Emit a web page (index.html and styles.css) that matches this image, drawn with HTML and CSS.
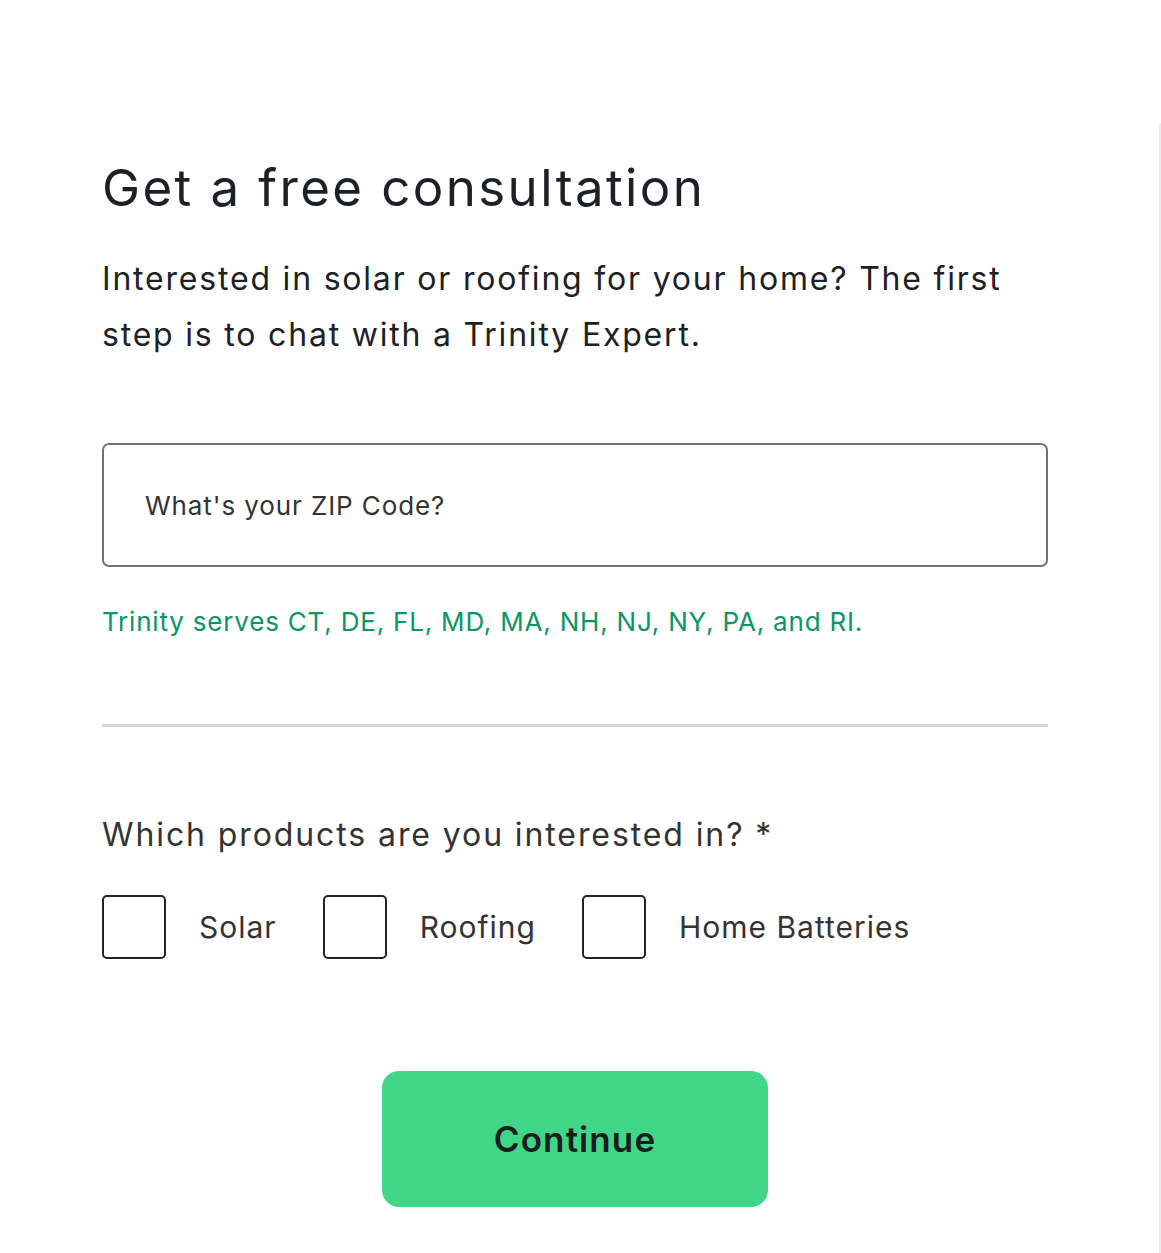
FILE: index.html
```html
<!DOCTYPE html>
<html lang="en">
  <head>
    <meta charset="UTF-8" />
    <meta name="viewport" content="width=device-width, initial-scale=1.0" />
    <title>Get a free consultation</title>
    <link rel="stylesheet" href="styles.css">
  </head>
  <body>
    <div class="panel">
      <div class="form-container">
        <h1>Get a free consultation</h1>
        <p class="intro">Interested in solar or roofing for your home? The first step is to chat with a Trinity Expert.</p>
        <form action="" method="post" id="form">
          <div class="zip-field">
            <input type="text" id="zip" name="zip" placeholder="What's your ZIP Code?" />
          </div>
          <p class="served">Trinity serves CT, DE, FL, MD, MA, NH, NJ, NY, PA, and RI.</p>
          <hr class="divider" />
          <p class="question">Which products are you interested in? *</p>
          <div class="options">
            <label class="option"><input type="checkbox" name="solar" /><span>Solar</span></label>
            <label class="option"><input type="checkbox" name="roofing" /><span>Roofing</span></label>
            <label class="option"><input type="checkbox" name="batteries" /><span>Home Batteries</span></label>
          </div>
          <div class="actions">
            <button type="submit" class="continue-btn">Continue</button>
          </div>
        </form>
      </div>
    </div>
  </body>
</html>
```

FILE: styles.css
```css
body {
  font-family: Inter, "Noto Sans", sans-serif;
  background-color: #fff;
  margin: 0;
  color: #1d2125;
}

.panel {
  margin-top: 123px;
  width: 1159px;
  border-right: 2px solid #ececec;
  min-height: 1130px;
}

.form-container {
  width: 946px;
  padding-left: 102px;
  padding-top: 30px;
}

h1 {
  font-size: 51px;
  font-weight: 400;
  margin: 0;
  line-height: 70px;
  letter-spacing: 2.4px;
  color: #1d2125;
}

.intro {
  font-size: 32px;
  line-height: 56px;
  margin: 28px 0 0;
  letter-spacing: 1.8px;
}

.zip-field {
  margin-top: 80px;
}

.zip-field input {
  width: 100%;
  height: 124px;
  box-sizing: border-box;
  border: 2px solid #727272;
  border-radius: 7px;
  padding: 0 41px;
  font-family: inherit;
  font-size: 26px;
  letter-spacing: 0.9px;
  color: #333;
  outline: none;
}

.zip-field input::placeholder {
  color: #333;
}

.served {
  color: #0a9563;
  font-size: 26px;
  letter-spacing: 0.8px;
  margin: 37px 0 0;
  line-height: 36px;
}

.divider {
  border: none;
  height: 3px;
  background-color: #d6d6d6;
  margin: 84px 0 0;
}

.question {
  font-size: 32px;
  letter-spacing: 1.9px;
  color: #333;
  margin: 88px 0 0;
  line-height: 40px;
}

.options {
  display: flex;
  align-items: center;
  margin-top: 40px;
  gap: 46px;
}

.option {
  display: flex;
  align-items: center;
  gap: 33px;
  font-size: 30px;
  letter-spacing: 1px;
  color: #333;
}

.option input {
  appearance: none;
  margin: 0;
  width: 64px;
  height: 64px;
  border: 2px solid #222;
  border-radius: 5px;
  background: #fff;
}

.actions {
  display: flex;
  justify-content: center;
  margin-top: 112px;
}

.continue-btn {
  width: 386px;
  height: 136px;
  background-color: #3fd688;
  color: #1a1d1f;
  border: none;
  border-radius: 17px;
  font-family: inherit;
  font-size: 35px;
  font-weight: 600;
  letter-spacing: 1.1px;
  cursor: pointer;
}

.continue-btn:hover {
  background-color: #36c97c;
}
```
